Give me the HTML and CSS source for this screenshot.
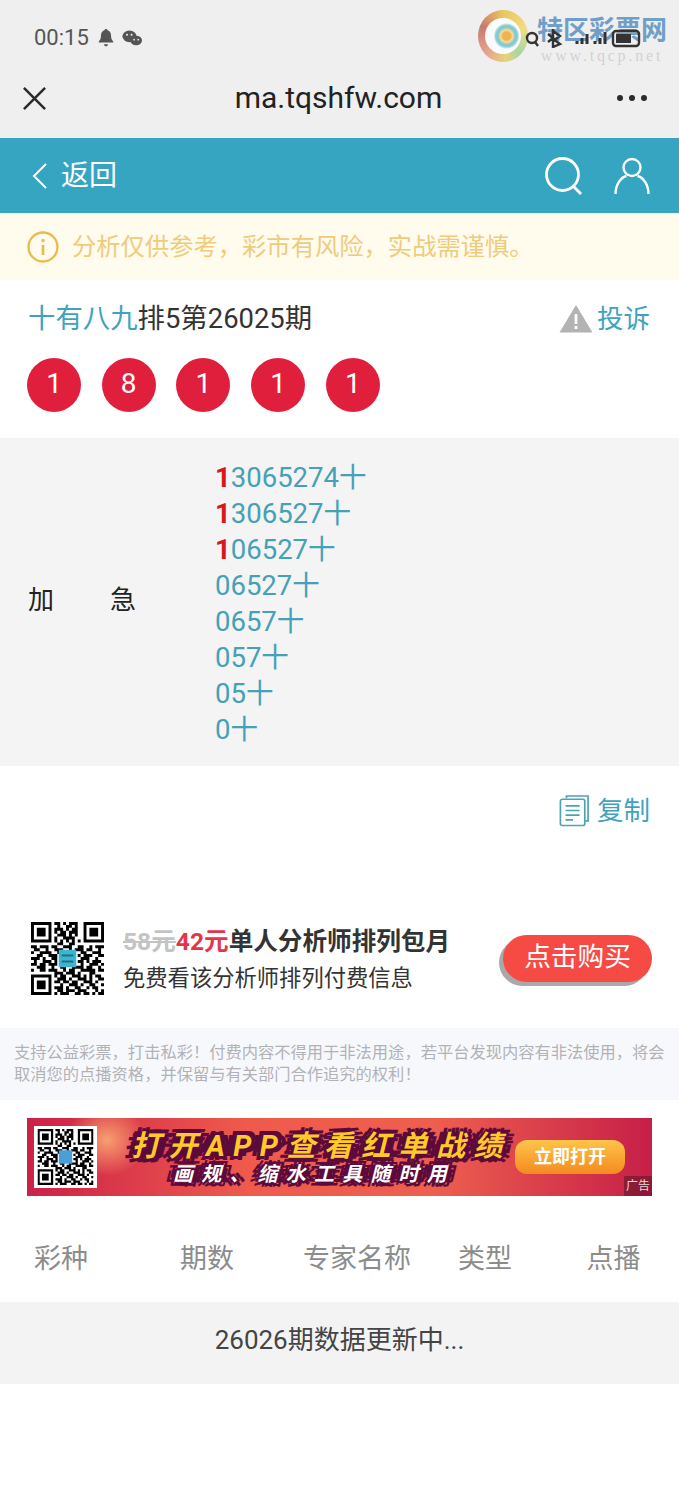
FILE: index.html
```html
<!DOCTYPE html>
<html>
<head>
<meta content="text/html; charset=UTF-8" http-equiv="content-type"/>
<title>ma.tqshfw.com</title>
<link rel="stylesheet" href="styles.css">
</head>
<body>
  <svg class="defs" width="0" height="0">
    <symbol id="qr" viewBox="0 0 25 25">
      <path fill-rule="evenodd" d="M0 0h7v7H0zM1 1v5h5V1zM2 2h3v3H2zM18 0h7v7h-7zM19 1v5h5V1zM20 2h3v3h-3zM0 18h7v7H0zM1 19v5h5v-5zM2 20h3v3H2z"/>
      <path fill="none" stroke="#000" stroke-width="1" d="M8 .5h2M11 .5h1M13 .5h3M9 1.5h1M12 1.5h2M15 1.5h1M8 2.5h3M12 2.5h1M14 2.5h2M8 3.5h1M10 3.5h2M13 3.5h3M9 4.5h3M13 4.5h1M15 4.5h1M8 5.5h1M11 5.5h4M8 6.5h1M10 6.5h1M12 6.5h1M14 6.5h1M16 6.5h1M9 7.5h2M13 7.5h2M0 8.5h2M3 8.5h3M7 8.5h2M11 8.5h3M16 8.5h2M20 8.5h1M22 8.5h3M1 9.5h2M5 9.5h1M8 9.5h3M13 9.5h1M15 9.5h3M19 9.5h2M23 9.5h1M0 10.5h1M3 10.5h4M9 10.5h1M12 10.5h3M17 10.5h2M21 10.5h3M2 11.5h2M6 11.5h3M16 11.5h1M18 11.5h3M23 11.5h2M0 12.5h3M4 12.5h1M7 12.5h2M17 12.5h3M22 12.5h1M1 13.5h1M4 13.5h3M8 13.5h1M16 13.5h2M19 13.5h1M21 13.5h3M0 14.5h2M3 14.5h2M6 14.5h3M17 14.5h1M20 14.5h3M24 14.5h1M2 15.5h3M7 15.5h1M10 15.5h2M14 15.5h4M19 15.5h2M23 15.5h1M0 16.5h1M3 16.5h2M6 16.5h3M11 16.5h1M13 16.5h2M17 16.5h5M23 16.5h2M8 17.5h3M12 17.5h3M16 17.5h1M20 17.5h2M8 18.5h1M10 18.5h2M14 18.5h3M18 18.5h1M20 18.5h1M22 18.5h2M9 19.5h3M13 19.5h1M16 19.5h3M20 19.5h1M23 19.5h2M8 20.5h2M11 20.5h2M14 20.5h2M18 20.5h3M22 20.5h1M10 21.5h1M13 21.5h3M17 21.5h1M20 21.5h2M24 21.5h1M8 22.5h3M12 22.5h1M15 22.5h2M19 22.5h1M21 22.5h2M9 23.5h2M12 23.5h3M16 23.5h3M22 23.5h1M24 23.5h1M8 24.5h1M10 24.5h3M15 24.5h2M18 24.5h2M21 24.5h1M23 24.5h2"/>
    </symbol>
  </svg>

  <header class="wechat">
    <div class="status">
      <span class="time">00:15</span>
      <svg class="s-icon" viewBox="0 0 20 22"><path d="M10 1c1 0 1.600.7 1.700 1.500 2.700.7 3.900 3 3.900 5.700 0 3.300.8 5 2.400 6.500v1.300H2v-1.300c1.600-1.500 2.400-3.200 2.400-6.500 0-2.700 1.200-5 3.900-5.700C8.400 1.700 9 1 10 1zM7.800 18h4.400c0 1.300-1 2.300-2.200 2.300S7.800 19.300 7.800 18z"/></svg>
      <svg class="s-icon wx" viewBox="0 0 24 20"><ellipse cx="9" cy="8" rx="8.500" ry="7"/><ellipse cx="17" cy="13" rx="7" ry="5.800"/><circle cx="6" cy="6" r="1.200" fill="#efeff0"/><circle cx="11.500" cy="6" r="1.200" fill="#efeff0"/><circle cx="14.500" cy="12" r="1" fill="#efeff0"/><circle cx="19.500" cy="12" r="1" fill="#efeff0"/></svg>
      <div class="status-right">
        <svg class="sys" viewBox="0 0 116 20" fill="none" stroke="#333" stroke-width="2.400">
          <circle cx="7" cy="10" r="5"/><path d="M10 14l3 4"/>
          <path d="M28 3l7 5-7 5V1zM28 11l7 5-7 3V11M23 6l5 4-5 4"/>
          <path d="M52 16v-3M57 16V10M62 16V6M70 16v-3M75 16V10M80 16V4" stroke-width="3"/>
          <rect x="88" y="3" width="26" height="15" rx="3"/><rect x="91" y="6" width="15" height="9" fill="#333" stroke="none"/>
        </svg>
      </div>
    </div>
    <div class="title-bar">
      <svg class="close" viewBox="0 0 26 26"><path d="M2 2l22 22M24 2L2 24" fill="none" stroke="#2b2b2b" stroke-width="2.600"/></svg>
      <div class="host">ma.tqshfw.com</div>
      <div class="more"><i></i><i></i><i></i></div>
    </div>
    <div class="watermark">
      <div class="swirl"><span></span></div>
      <div class="wm-text">
        <b>特区彩票网</b>
        <em>www.tqcp.net</em>
      </div>
    </div>
  </header>

  <nav class="nav">
    <a class="back" href="#">
      <svg class="chev" viewBox="0 0 16 26"><path d="M14 1L2 13l12 12" fill="none" stroke="#fff" stroke-width="2"/></svg>
      返回
    </a>
    <svg class="search" viewBox="0 0 38 38"><circle cx="17.500" cy="17.500" r="16" fill="none" stroke="#fff" stroke-width="2.800"/><path d="M28 29l8 8" stroke="#fff" stroke-width="2.800"/></svg>
    <svg class="user" viewBox="0 0 36 38"><circle cx="18" cy="10.500" r="8.500" fill="none" stroke="#fff" stroke-width="2.400"/><path d="M1.500 37c0-10 6-17 11-18M34.500 37c0-10-6-17-11-18" fill="none" stroke="#fff" stroke-width="2.400"/></svg>
  </nav>

  <div class="notice">
    <svg class="info" viewBox="0 0 32 32"><circle cx="16" cy="16" r="14.500" fill="none" stroke="#e9bb50" stroke-width="2.400"/><circle cx="16" cy="9.500" r="1.700" fill="#e9bb50"/><path d="M16 14v10" stroke="#e9bb50" stroke-width="2.600"/></svg>
    分析仅供参考，彩市有风险，实战需谨慎。
  </div>

  <div class="head-row">
    <div class="issue"><a href="#">十有八九</a>排5第26025期</div>
    <a class="report" href="#">
      <svg class="warn" viewBox="0 0 34 29"><path d="M17 1L33.500 28.500H.5z" fill="#b3b3b3"/><path d="M17 10v10M17 22v3" stroke="#fff" stroke-width="2.800"/></svg>
      投诉
    </a>
  </div>

  <div class="balls">
    <span>1</span><span>8</span><span>1</span><span>1</span><span>1</span>
  </div>

  <section class="plan">
    <div class="plan-name"><span>加</span><span>急</span></div>
    <div class="plan-nums">
      <div><b>1</b>3065274十</div>
      <div><b>1</b>306527十</div>
      <div><b>1</b>06527十</div>
      <div>06527十</div>
      <div>0657十</div>
      <div>057十</div>
      <div>05十</div>
      <div>0十</div>
    </div>
  </section>

  <div class="copy-row">
    <a class="copy" href="#">
      <svg class="copy-ic" viewBox="0 0 32 34" fill="none" stroke="#4ba3b4" stroke-width="1.800"><path d="M8 4V1.500h23V28h-3"/><rect x="1.500" y="5" width="26" height="28" rx="2"/><path d="M7 12h15M7 17h15M7 22h15M7 27h8"/></svg>
      复制
    </a>
  </div>

  <div class="promo">
    <div class="promo-qr">
      <svg viewBox="0 0 25 25"><use href="#qr"/><rect x="9.500" y="9.500" width="6" height="6" fill="#3fb4cf"/><path d="M10.500 11.500h4M10.500 13.500h4" stroke="#1c6f86" stroke-width=".7"/></svg>
    </div>
    <div class="promo-text">
      <div class="promo-title"><s>58元</s><em>42元</em>单人分析师排列包月</div>
      <div class="promo-sub">免费看该分析师排列付费信息</div>
    </div>
    <a class="buy" href="#">点击购买</a>
  </div>

  <p class="disclaimer">支持公益彩票，打击私彩！付费内容不得用于非法用途，若平台发现内容有非法使用，将会取消您的点播资格，并保留与有关部门合作追究的权利！</p>

  <div class="banner">
    <div class="banner-qr">
      <svg viewBox="0 0 25 25"><use href="#qr"/><rect x="9.500" y="9.500" width="6" height="6" fill="#4a9fd8"/></svg>
    </div>
    <div class="banner-text">
      <div class="b-main">打开APP查看红单战绩</div>
      <div class="b-sub">画规、缩水工具随时用</div>
    </div>
    <a class="b-btn" href="#">立即打开</a>
    <span class="ad-tag">广告</span>
  </div>

  <div class="thead">
    <span>彩种</span><span>期数</span><span>专家名称</span><span>类型</span><span>点播</span>
  </div>
  <div class="updating">26026期数据更新中...</div>
</body>
</html>
```

FILE: styles.css
```css
* {
  margin: 0;
  padding: 0;
  box-sizing: border-box;
}

body {
  background: #fff;
  font-family: Roboto, "Noto Sans CJK SC", sans-serif;
  line-height: 1.2;
  color: #333;
  height: 1500px;
  overflow: hidden;
}

a {
  text-decoration: none;
  color: inherit;
}

.defs {
  display: block;
  height: 0;
}

/* wechat browser chrome */
.wechat {
  position: relative;
  background: #efeff0;
  height: 138px;
}

.status {
  display: flex;
  align-items: center;
  height: 75px;
  padding-left: 34px;
}

.time {
  font-size: 22px;
  padding-top: 2px;
  color: #555;
  margin-right: 8px;
}

.s-icon {
  width: 18px;
  height: 20px;
  fill: #555;
  margin-right: 7px;
}

.s-icon.wx {
  width: 20px;
}

.status-right {
  position: relative;
  z-index: 1;
  margin-left: auto;
  margin-right: 38px;
  display: flex;
}

.sys {
  width: 116px;
  height: 20px;
}

.title-bar {
  display: flex;
  align-items: center;
  height: 46px;
  padding: 0 32px 0 22px;
}

.close {
  width: 25px;
  height: 25px;
}

.host {
  flex: 1;
  text-align: center;
  font-size: 30px;
  color: #222;
  padding-left: 13px;
}

.more {
  display: flex;
  gap: 6px;
}

.more i {
  width: 6px;
  height: 6px;
  border-radius: 50%;
  background: #2b2b2b;
}

.watermark {
  position: absolute;
  left: 478px;
  top: 10px;
  display: flex;
  gap: 9px;
}

.swirl {
  width: 50px;
  height: 52px;
  border-radius: 50%;
  background: conic-gradient(#e8c75e, #f2dc83 20%, #a8d6a0 38%, #e9d27a 48%, #e6a48e 62%, #c97a6e 82%, #e8c75e);
  display: flex;
  align-items: center;
  justify-content: center;
}

.swirl span {
  width: 36px;
  height: 36px;
  border-radius: 50%;
  background: radial-gradient(circle at 60% 50%, #f2b24c 0 4px, #f5dd9a 6px, #7cc6d3 9px, #8fd0da 11px, #fbfbfb 13px);
}

.wm-text {
  display: flex;
  flex-direction: column;
  align-items: center;
  padding-top: 5px;
}

.wm-text b {
  font-size: 26px;
  line-height: 30px;
  color: #6f9fc9;
  white-space: nowrap;
}

.wm-text em {
  font: normal 16px/20px "Liberation Serif", serif;
  letter-spacing: 2.800px;
  color: #d2d2d4;
  margin-top: 1px;
}

/* site nav */
.nav {
  display: flex;
  align-items: center;
  height: 75px;
  background: #36a5c1;
  padding: 0 29px 0 32px;
}

.back {
  display: flex;
  align-items: center;
  gap: 13px;
  color: #fff;
  font-size: 28px;
  margin-right: auto;
}

.chev {
  width: 16px;
  height: 26px;
}

.search {
  width: 38px;
  height: 38px;
  margin-right: 31px;
}

.user {
  width: 36px;
  height: 38px;
}

.notice {
  display: flex;
  align-items: center;
  gap: 13px;
  height: 67px;
  background: #fffbed;
  padding-left: 27px;
  font-size: 24.300px;
  color: #efcb7c;
}

.info {
  width: 32px;
  height: 32px;
}

.head-row {
  display: flex;
  align-items: center;
  justify-content: space-between;
  height: 78px;
  padding: 0 29px 0 28px;
}

.issue {
  font-size: 27.400px;
  color: #333;
}

.issue a,
.report,
.copy {
  color: #3fa3bd;
}

.report,
.copy {
  display: flex;
  align-items: center;
  gap: 4px;
  font-size: 26.500px;
}

.warn {
  width: 34px;
  height: 29px;
}

.balls {
  display: flex;
  gap: 20.700px;
  padding-left: 27px;
  height: 80px;
}

.balls span {
  width: 54px;
  height: 54px;
  border-radius: 50%;
  background: #e01f3d;
  color: #fff;
  font-size: 28px;
  line-height: 51px;
  text-align: center;
}

.plan {
  display: flex;
  align-items: center;
  height: 328px;
  background: #f4f4f5;
  padding-left: 28px;
}

.plan-name {
  display: flex;
  gap: 56px;
  width: 187px;
  font-size: 26px;
  color: #222;
  margin-bottom: 2px;
}

.plan-nums {
  font-size: 27.500px;
  line-height: 36px;
  color: #46a0b6;
  margin-top: 3px;
}

.plan-nums b {
  color: #d9161c;
}

.copy-row {
  display: flex;
  justify-content: flex-end;
  align-items: flex-start;
  height: 88px;
  padding: 28px 29px 0 0;
}

.copy-ic {
  width: 30px;
  height: 33px;
  margin-right: 4px;
}

.promo {
  display: flex;
  height: 174px;
  padding: 68px 27px 33px 31px;
}

.promo-qr {
  width: 73px;
  height: 73px;
  margin-right: 19px;
}

.promo-qr svg,
.banner-qr svg {
  display: block;
  width: 100%;
  height: 100%;
}

.promo-text {
  flex: 1;
  white-space: nowrap;
}

.promo-title {
  font-size: 24.600px;
  line-height: 40px;
  font-weight: 700;
  color: #333;
}

.promo-title s {
  color: #c4c4c4;
}

.promo-title em {
  font-style: normal;
  color: #e5354a;
}

.promo-sub {
  font-size: 22.300px;
  line-height: 32px;
  color: #333;
}

.buy {
  align-self: flex-start;
  margin-top: 13px;
  width: 149px;
  height: 47px;
  border-radius: 24px;
  background: #f64a45;
  box-shadow: -4px 4px 0 #a9a9a9;
  color: #fff;
  font-size: 26.700px;
  line-height: 45px;
  text-align: center;
}

.disclaimer {
  height: 72px;
  background: #f7f8fc;
  padding: 14px 13px 0 14px;
  font-size: 16.270px;
  line-height: 21.500px;
  color: #b2b2b6;
}

.banner {
  position: relative;
  display: flex;
  align-items: center;
  height: 78px;
  margin: 18px 27px 0;
  padding-left: 7px;
  background: radial-gradient(ellipse 40px 36px at 80px 22px, #f8a070, rgba(248, 160, 112, 0)), linear-gradient(90deg, #cb2148, #ef5a4c 35%, #ee5f4e 65%, #c61f48);
}

.banner-qr {
  width: 63px;
  height: 62px;
  padding: 3px;
  background: #fff;
}

.banner-text {
  flex: 1;
  text-align: center;
  font-style: italic;
  font-weight: 700;
  white-space: nowrap;
  padding-left: 30px;
}

.b-main {
  font-size: 29px;
  line-height: 34px;
  letter-spacing: 8.400px;
  color: #ffc928;
  text-shadow: 3px 0 0 #5c0a3c, -3px 0 0 #5c0a3c, 0 3px 0 #5c0a3c, 0 -3px 0 #5c0a3c, 4px 4px 0 #5c0a3c, -4px 4px 0 #5c0a3c, 4px -4px 0 #5c0a3c, -4px -4px 0 #5c0a3c, 8px 0 0 #5c0a3c, -8px 0 0 #5c0a3c;
}

.b-sub {
  font-size: 20px;
  line-height: 22px;
  letter-spacing: 8.200px;
  margin-right: 14px;
  color: #fff;
  text-shadow: 3px 0 0 #5c0a3c, -3px 0 0 #5c0a3c, 0 3px 0 #5c0a3c, 0 -3px 0 #5c0a3c, 4px 4px 0 #5c0a3c, -4px 4px 0 #5c0a3c, 4px -4px 0 #5c0a3c, -4px -4px 0 #5c0a3c, 8px 0 0 #5c0a3c, -8px 0 0 #5c0a3c;
}

.b-btn {
  flex: none;
  width: 110px;
  height: 34px;
  margin-right: 27px;
  border-radius: 12px;
  background: linear-gradient(#fdc54a, #f58a1f);
  color: #fff;
  font-size: 18px;
  font-weight: 700;
  line-height: 34px;
  text-align: center;
}

.ad-tag {
  position: absolute;
  right: 0;
  bottom: 0;
  width: 28px;
  height: 20px;
  background: rgba(90, 20, 40, .55);
  color: #e8d8d8;
  font-size: 12px;
  line-height: 20px;
  text-align: center;
}

.thead {
  display: grid;
  grid-template-columns: 122px 170px 130px 126px 1fr;
  align-items: center;
  height: 82px;
  margin-top: 24px;
  padding-bottom: 4px;
  font-size: 27px;
  color: #8c8c8c;
  text-align: center;
  white-space: nowrap;
}

.updating {
  height: 82px;
  background: #f3f3f4;
  font-size: 26px;
  line-height: 76px;
  text-align: center;
  color: #444;
}
```
